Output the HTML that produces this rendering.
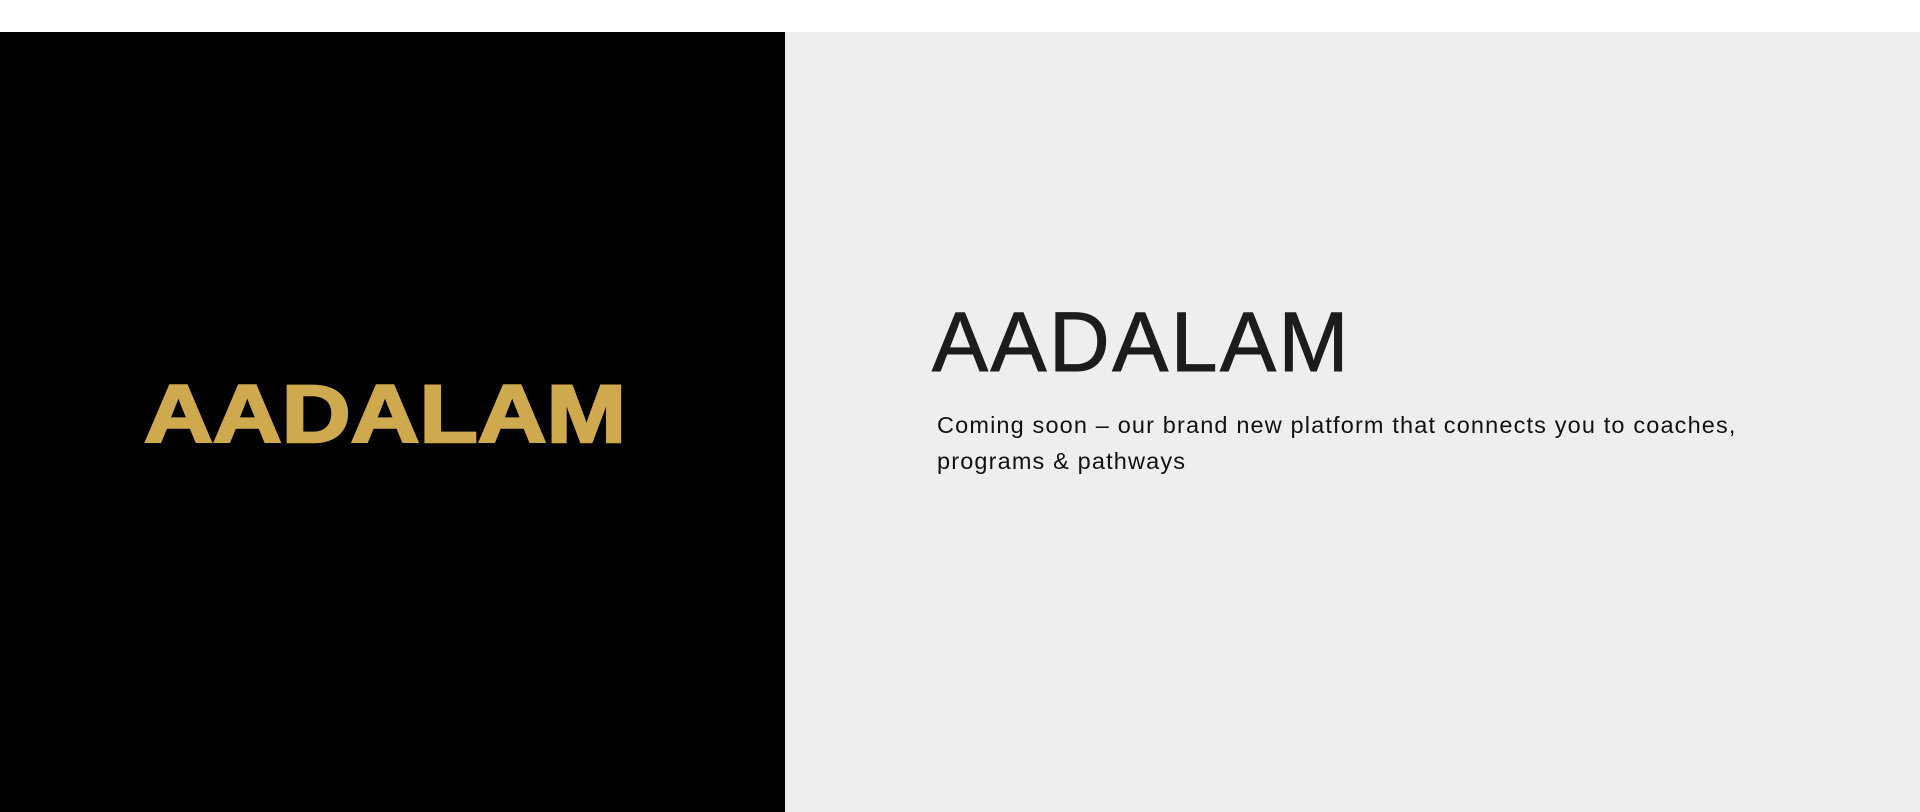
<!DOCTYPE html>
<html><head><meta charset="utf-8"><style>
html,body{margin:0;padding:0;width:1920px;height:812px;overflow:hidden;background:#fff;font-family:"Liberation Sans",sans-serif}
.l{position:absolute;left:0;top:32px;width:785px;height:780px;background:#000}
.r{position:absolute;left:785px;top:32px;width:1135px;height:780px;background:#eeeeee}
h1{position:absolute;left:932px;top:300px;margin:0;font-size:84px;font-weight:normal;color:#1c1c1c;line-height:1;letter-spacing:2.5px;-webkit-text-stroke:1px #1c1c1c}
p{position:absolute;left:937px;top:408px;margin:0;font-size:23.5px;line-height:35.5px;color:#111;width:980px;letter-spacing:1.15px}
</style></head><body>
<div class="l"><svg width="785" height="780" style="position:absolute;left:0;top:0">
<text x="144" y="410" font-family="Liberation Sans" font-weight="bold" font-size="82" fill="#cfa94d" stroke="#cfa94d" stroke-width="2.5" textLength="482" lengthAdjust="spacingAndGlyphs">AADALAM</text></svg></div>
<div class="r"></div>
<h1>AADALAM</h1>
<p>Coming soon – our brand new platform that connects you to coaches,<br>programs &amp; pathways</p>
</body></html>
